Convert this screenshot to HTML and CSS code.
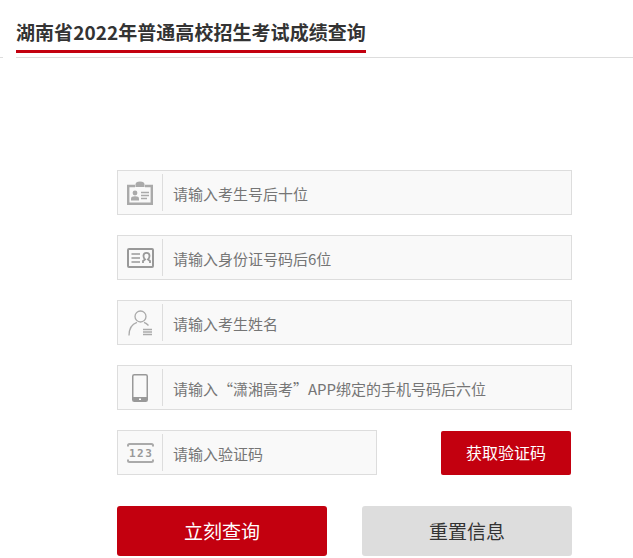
FILE: index.html
```html
<!DOCTYPE html>
<html lang="zh-CN">
<head>
	<meta charset="UTF-8">
	<title>湖南省2022年普通高校招生考试成绩查询</title>
	<link rel="stylesheet" href="styles.css">
</head>
<body>
	<div class="stub"></div>
	<div class="head">
		<h1>湖南省2022年普通高校招生考试成绩查询</h1>
	</div>

	<form class="form">
		<div class="row">
			<label class="field">
				<span class="ico">
					<svg width="26" height="24" viewBox="0 0 26 24">
						<path d="M8.500 6V3.500Q8.500 .5 13 .5T17.500 3.500V6Z" fill="#aaa"/>
						<path d="M8 5H1.200V22.800H24.800V5H18" fill="none" stroke="#aaa" stroke-width="2.400"/>
						<circle cx="8" cy="12" r="2.400" fill="#aaa"/>
						<path d="M4 19.500V17.500Q4 15.300 8 15.300T12 17.500V19.500Z" fill="#aaa"/>
						<path d="M14 11.500H22M14 14.500H22M14 17.500H20" stroke="#aaa" stroke-width="1.300"/>
					</svg>
				</span>
				<input class="txt" type="text" placeholder="请输入考生号后十位">
			</label>
		</div>
		<div class="row">
			<label class="field">
				<span class="ico">
					<svg width="27" height="20" viewBox="0 0 27 20">
						<rect x="1" y="1" width="25" height="18" rx="1" fill="none" stroke="#999" stroke-width="2"/>
						<path d="M4.500 6H13M4.500 10H13M4.500 14H13" stroke="#999" stroke-width="1.600"/>
						<path d="M16 15V13L18 11.500Q16.500 10 16.500 8Q16.500 4.800 19.500 4.800T22.500 8Q22.500 10 21 11.500L23 13V15" fill="none" stroke="#999" stroke-width="1.800"/>
					</svg>
				</span>
				<input class="txt" type="text" placeholder="请输入身份证号码后6位">
			</label>
		</div>
		<div class="row">
			<label class="field">
				<span class="ico">
					<svg width="26" height="26" viewBox="0 0 26 26">
						<circle cx="13.500" cy="6.500" r="5.500" fill="none" stroke="#aaa" stroke-width="1.300"/>
						<path d="M2 25.500Q2 15 10 12.300M17 12.300Q19.500 13.200 21.500 15.500" fill="none" stroke="#aaa" stroke-width="1.300"/>
						<path d="M16 19.500H25M16 22H25M16 24.500H25" stroke="#aaa" stroke-width="1.500"/>
					</svg>
				</span>
				<input class="txt" type="text" placeholder="请输入考生姓名">
			</label>
		</div>
		<div class="row">
			<label class="field">
				<span class="ico">
					<svg width="16" height="28" viewBox="0 0 16 28">
						<rect x=".75" y=".75" width="14.500" height="26.500" rx="1.500" fill="none" stroke="#999" stroke-width="1.500"/>
						<path d="M1 23H15V26Q15 27 14 27H2Q1 27 1 26Z" fill="#999"/>
						<rect x="7" y="24.500" width="2" height="1.500" fill="#fff"/>
					</svg>
				</span>
				<input class="txt" type="text" placeholder="请输入“潇湘高考”APP绑定的手机号码后六位">
			</label>
		</div>
		<div class="row row_code">
			<label class="field field_code">
				<span class="ico">
					<svg width="27" height="20" viewBox="0 0 27 20">
						<path d="M1 3.500V2.500Q1 1 2.500 1H24.500Q26 1 26 2.500V3.500M1 16.500V17.500Q1 19 2.500 19H24.500Q26 19 26 17.500V16.500" fill="none" stroke="#aaa" stroke-width="2"/>
						<text class="ico_num" x="14.200" y="14" text-anchor="middle">123</text>
					</svg>
				</span>
				<input class="txt" type="text" placeholder="请输入验证码">
			</label>
			<button class="btn_code" type="button">获取验证码</button>
		</div>
		<div class="actions">
			<button class="btn btn_red" type="button">立刻查询</button>
			<button class="btn btn_gray" type="reset">重置信息</button>
		</div>
	</form>
</body>
</html>
```

FILE: styles.css
```css
* {
	padding: 0;
	margin: 0;
	box-sizing: border-box;
}
body {
	font-family: "Noto Sans CJK SC", "Liberation Sans", sans-serif;
	color: #333;
	background-color: #fff;
	position: relative;
}
.stub {
	width: 3px;
	height: 1px;
	background-color: #ddd;
	position: absolute;
	left: 0;
	top: 57px;
}
.head {
	margin-left: 16px;
	height: 58px;
	padding-top: 17px;
	border-bottom: 1px solid #ddd;
}
.head h1 {
	display: inline-block;
	height: 36px;
	font-size: 19px;
	line-height: 30px;
	font-weight: bold;
	letter-spacing: 0.05px;
	color: #333;
	border-bottom: 3px solid #c3000f;
}
.form {
	width: 455px;
	margin: 112px 0 0 117px;
}
.row {
	margin-bottom: 20px;
}
.row_code {
	display: flex;
	justify-content: space-between;
	align-items: center;
	margin-bottom: 31px;
}
.field {
	display: flex;
	align-items: center;
	height: 45px;
	background-color: #f9f9f9;
	border: 1px solid #ddd;
}
.field_code {
	width: 260px;
}
.ico {
	width: 45px;
	height: 37px;
	display: flex;
	align-items: center;
	justify-content: center;
	border-right: 1px solid #ddd;
	flex-shrink: 0;
}
.ico_num {
	font-family: "DejaVu Sans Mono", monospace;
	font-size: 11px;
	font-weight: bold;
	letter-spacing: 1.5px;
	fill: #999;
}
.txt {
	flex: 1;
	min-width: 0;
	height: 100%;
	padding: 1px 0 0 10px;
	border: 0;
	outline: 0;
	background: transparent;
	font-family: inherit;
	font-size: 15px;
}
.txt::placeholder {
	color: #757575;
	opacity: 1;
}
.btn_code {
	width: 130px;
	height: 44px;
	margin-right: 1px;
	padding-bottom: 2px;
	border: 0;
	border-radius: 2px;
	background-color: #c3000f;
	color: #fff;
	font-family: inherit;
	font-size: 16px;
	cursor: pointer;
}
.actions {
	display: flex;
	justify-content: space-between;
}
.btn {
	width: 210px;
	height: 50px;
	padding-bottom: 2px;
	border: 0;
	border-radius: 3px;
	font-family: inherit;
	font-size: 19px;
	cursor: pointer;
}
.btn_red {
	background-color: #c3000f;
	color: #fff;
}
.btn_gray {
	background-color: #ddd;
	color: #333;
}
```
